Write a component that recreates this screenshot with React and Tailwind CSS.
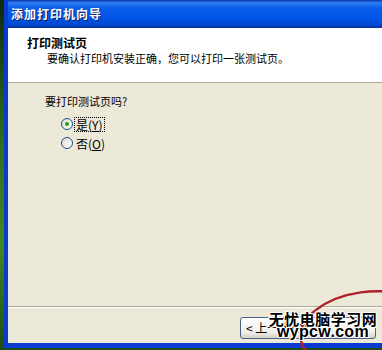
import React from "react";

const cjk = "font-['SimSun','Noto_Sans_CJK_SC',sans-serif]";

const Radio = ({ checked }) => (
  <span className="relative inline-block w-[12px] h-[12px] rounded-full border border-[#1c5180] bg-[linear-gradient(135deg,#dcdcd6,#ffffff)] shrink-0">
    {checked && (
      <span className="absolute left-[3px] top-[3px] w-[4px] h-[4px] rounded-full bg-[#21a121]" />
    )}
  </span>
);

const App = () => {
  return (
    <div className={`relative w-[382px] h-[350px] overflow-hidden bg-[linear-gradient(to_bottom,#0f2a12,#2e6d1c_40%,#3f8a22_70%,#1e4c14)] ${cjk}`}>
      {/* window */}
      <div className="ml-[4px] w-[400px] h-[348px] flex flex-col border-l-[4px] border-b-[5px] border-[#0a3ad0] bg-[#ece9d8]">
        {/* title bar */}
        <div className="h-[28px] shrink-0 flex items-center pl-[3px] bg-[linear-gradient(to_bottom,#0a2fa8_0%,#2f7ff2_10%,#0a5de8_28%,#0055e5_65%,#0049d2_88%,#0a2f9a_100%)]">
          <span className="text-white text-[12px] font-bold tracking-[1px] [text-shadow:1px_1px_#0a1e6e]">
            添加打印机向导
          </span>
        </div>
        {/* header */}
        <div className="h-[55px] shrink-0 bg-white border-b border-[#aca899] pl-[19px] pt-[8px]">
          <div className="text-[12px] font-bold text-black leading-[14px]">打印测试页</div>
          <div className="text-[11px] text-black leading-[14px] pl-[20px] mt-[1px]">
            要确认打印机安装正确，您可以打印一张测试页。
          </div>
        </div>
        {/* body */}
        <div className="flex-1 flex flex-col pl-[37px] pt-[11px] border-b border-[#aca899]">
          <div className="text-[11px] text-black leading-[14px]">要打印测试页吗?</div>
          <div className="flex flex-col gap-[7px] pl-[16px] mt-[10px]">
            <label className="flex items-center gap-[1px] h-[12px]">
              <Radio checked />
              <span className="text-[12px] leading-[13px] text-black border border-dotted border-black px-[1px]">
                是(<u>Y</u>)
              </span>
            </label>
            <label className="flex items-center gap-[1px] h-[12px]">
              <Radio />
              <span className="text-[12px] leading-[13px] text-black px-[2px]">
                否(<u>O</u>)
              </span>
            </label>
          </div>
        </div>
        {/* footer */}
        <div className="h-[36px] shrink-0 border-t border-white flex items-start pt-[9px] pl-[232px]">
          <button className="w-[136px] h-[22px] rounded-[3px] border border-[#4d6185] bg-[linear-gradient(to_bottom,#ffffff,#f0f0ea_70%,#d6d0c5)] text-[12px] text-black text-left pl-[5px] leading-[20px]">
            &lt; 上一步(B)
          </button>
        </div>
      </div>

      {/* red circle annotation */}
      <svg className="absolute left-0 top-0" width="382" height="350" viewBox="0 0 382 350">
        <ellipse cx="366" cy="330" rx="66" ry="38" fill="none" stroke="#b0202a" strokeWidth="2.5" transform="rotate(-8 366 330)" />
      </svg>

      {/* watermark */}
      <div className="absolute left-[268px] top-[311px] w-[110px] flex flex-col items-center font-['Noto_Sans_CJK_SC',sans-serif] font-bold text-black leading-[15px] [text-shadow:1px_0_#fff,-1px_0_#fff,0_1px_#fff,0_-1px_#fff,1px_1px_#fff,-1px_-1px_#fff]">
        <span className="text-[15px] tracking-[0.5px]">无忧电脑学习网</span>
        <span className="text-[16px] font-['Liberation_Sans',sans-serif] tracking-[0.3px] -mt-[2px]">wypcw.com</span>
      </div>
    </div>
  );
};

export default App;
